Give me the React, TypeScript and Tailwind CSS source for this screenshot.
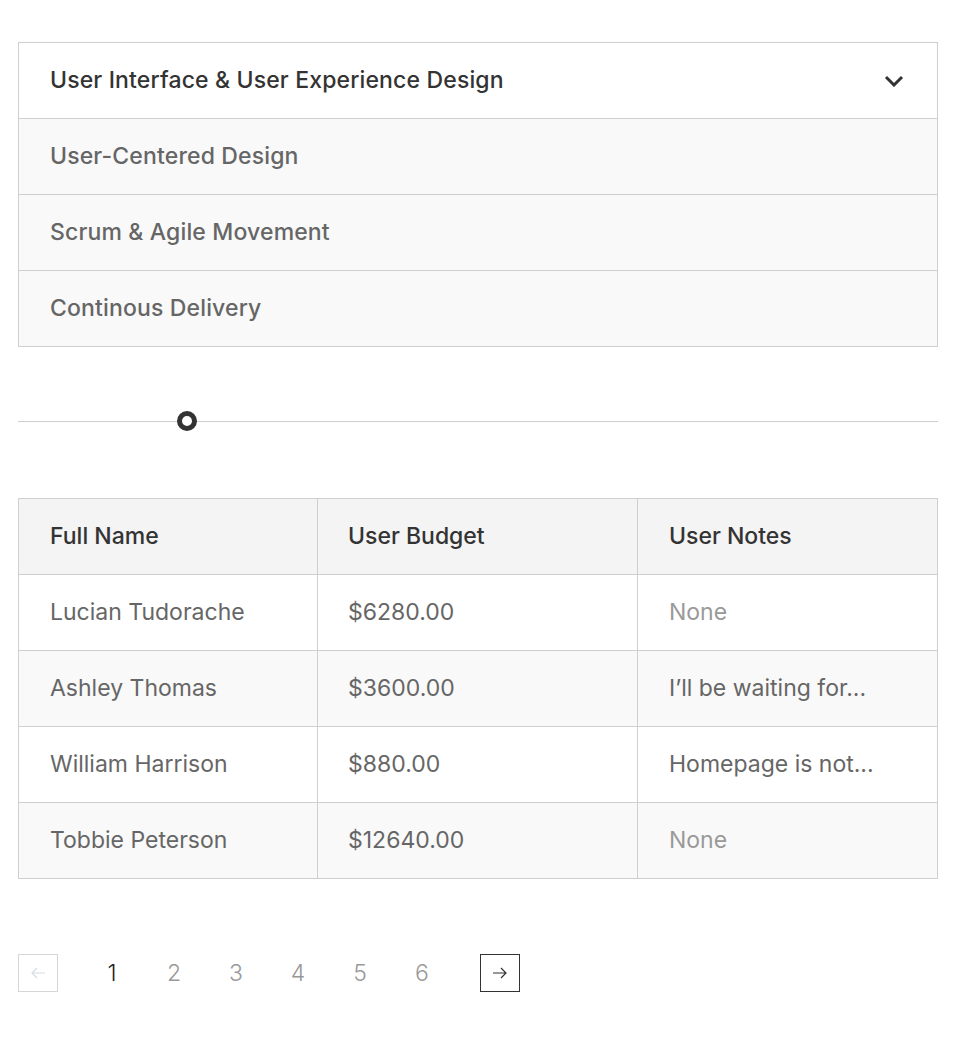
import { useState } from "react";

const topics = [
  "User Interface & User Experience Design",
  "User-Centered Design",
  "Scrum & Agile Movement",
  "Continous Delivery",
];

const rows = [
  { name: "Lucian Tudorache", budget: "$6280.00", notes: "None" },
  { name: "Ashley Thomas", budget: "$3600.00", notes: "I’ll be waiting for..." },
  { name: "William Harrison", budget: "$880.00", notes: "Homepage is not..." },
  { name: "Tobbie Peterson", budget: "$12640.00", notes: "None" },
];

export default function App() {
  const [page, setPage] = useState(1);

  return (
    <div className="min-h-screen bg-white pl-[18px] pr-[16px] pt-[42px] font-['Inter',sans-serif] text-[23px]">
      {/* Accordion */}
      <div className="border border-[#cfcfcf]">
        {topics.map((t, i) => (
          <div
            key={t}
            className={
              "flex items-center justify-between px-[31px] font-medium tracking-[0.15px] " +
              (i > 0 ? "h-[76px] border-t border-[#cfcfcf] bg-[#f9f9f9] text-[#666]" : "h-[75px] bg-white text-[#333]")
            }
          >
            <span>{t}</span>
            {i === 0 && (
              <svg width="20" height="12" viewBox="0 0 20 12" className="mr-[2px]">
                <path d="M2 2l8 8 8-8" fill="none" stroke="#333" strokeWidth="3" />
              </svg>
            )}
          </div>
        ))}
      </div>

      {/* Slider */}
      <div className="relative mt-[74px] h-px bg-[#cfcfcf]">
        <div className="absolute left-[159px] top-[-10px] h-[20px] w-[20px] rounded-full border-[5px] border-[#333] bg-white" />
      </div>

      {/* Table */}
      <div className="mt-[76px] border border-[#cfcfcf]">
        <div className="grid h-[75px] grid-cols-[298px_320px_1fr] bg-[#f4f4f4] font-medium text-[#333]">
          <div className="flex items-center pl-[31px]">Full Name</div>
          <div className="flex items-center border-l border-[#cfcfcf] pl-[30px]">User Budget</div>
          <div className="flex items-center border-l border-[#cfcfcf] pl-[31px]">User Notes</div>
        </div>
        {rows.map((r, i) => (
          <div
            key={r.name}
            className={
              "grid h-[76px] grid-cols-[298px_320px_1fr] border-t border-[#cfcfcf] text-[#666] " +
              (i % 2 === 0 ? "bg-white" : "bg-[#f9f9f9]")
            }
          >
            <div className="flex items-center pl-[31px]">{r.name}</div>
            <div className="flex items-center border-l border-[#cfcfcf] pl-[30px]">{r.budget}</div>
            <div
              className={
                "flex items-center border-l border-[#cfcfcf] pl-[31px] " +
                (r.notes === "None" ? "text-[#999]" : "")
              }
            >
              {r.notes}
            </div>
          </div>
        ))}
      </div>

      {/* Pagination */}
      <div className="mt-[75px] flex items-center">
        <button className="flex h-[38px] w-[40px] items-center justify-center border border-[#d6d6d6]">
          <svg width="16" height="12" viewBox="0 0 16 12">
            <path d="M15 6H2M7 1L2 6l5 5" fill="none" stroke="#d6dde0" strokeWidth="1.2" />
          </svg>
        </button>
        <div className="ml-[23px] flex">
          {[1, 2, 3, 4, 5, 6].map((n) => (
            <button
              key={n}
              onClick={() => setPage(n)}
              className={
                "w-[62px] text-center font-light " + (page === n ? "text-[#222]" : "text-[#999]")
              }
            >
              {n}
            </button>
          ))}
        </div>
        <button className="ml-[27px] flex h-[38px] w-[40px] items-center justify-center border border-[#333]">
          <svg width="16" height="12" viewBox="0 0 16 12">
            <path d="M1 6h13M9 1l5 5-5 5" fill="none" stroke="#333" strokeWidth="1.2" />
          </svg>
        </button>
      </div>
    </div>
  );
}
